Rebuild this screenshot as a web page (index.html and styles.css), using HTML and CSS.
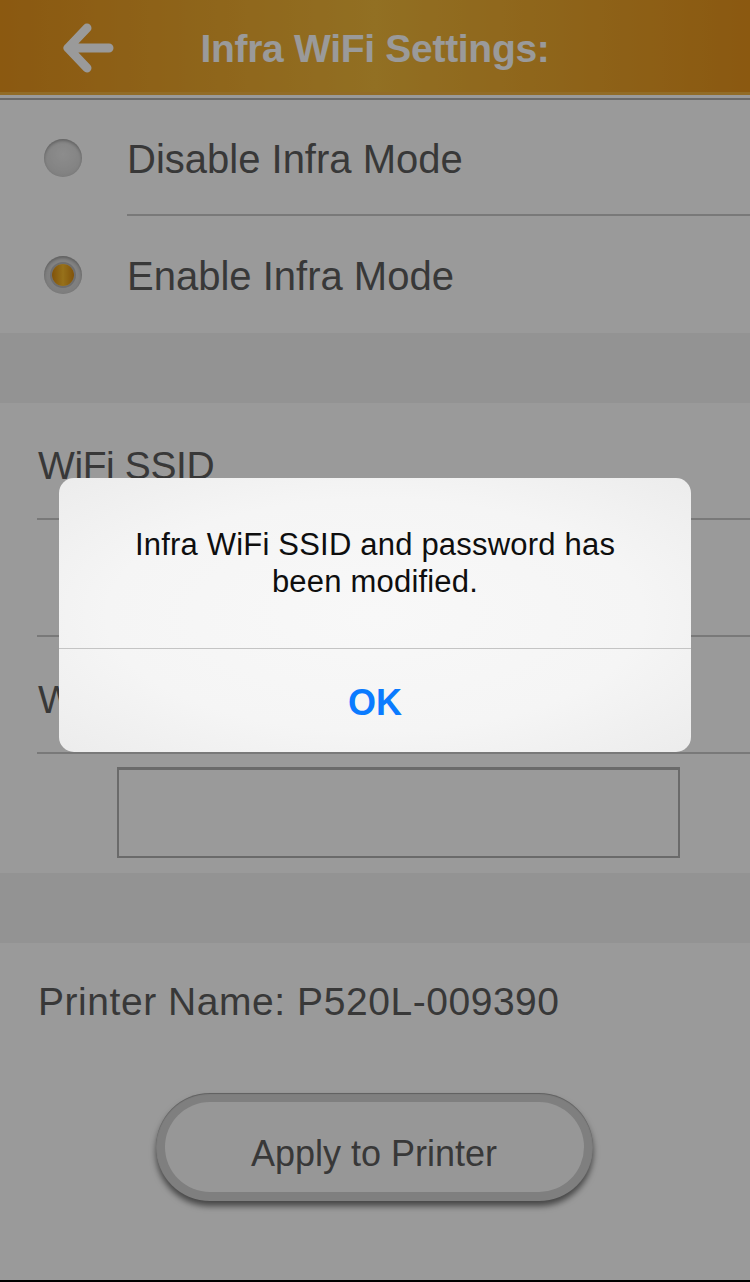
FILE: index.html
```html
<!DOCTYPE html>
<html lang="en">
<head>
<meta charset="utf-8">
<title>Infra WiFi Settings</title>
<link rel="stylesheet" href="styles.css">
</head>
<body>
<div class="screen">
  <header class="topbar">
    <div class="back" aria-label="Back">
      <svg width="52" height="52" viewBox="0 0 52 52">
        <path d="M25 6 L6 26 L25 46 M6 26 L47 26" fill="none" stroke="#ffffff" stroke-width="9" stroke-linecap="round" stroke-linejoin="round"/>
      </svg>
    </div>
    <h1 class="title">Infra WiFi Settings:</h1>
  </header>
  <div class="shade-line"></div>

  <section class="group radios">
    <div class="radio-row">
      <span class="radio"></span>
      <span class="radio-label">Disable Infra Mode</span>
    </div>
    <div class="radio-row">
      <span class="radio on"><span class="dot"></span></span>
      <span class="radio-label">Enable Infra Mode</span>
    </div>
  </section>

  <div class="band"></div>

  <section class="group form">
    <div class="field-label">WiFi SSID</div>
    <div class="field-input"></div>
    <div class="field-label">WiFi Password</div>
    <div class="box-row"><div class="textbox"></div></div>
  </section>

  <div class="band"></div>

  <section class="group bottom">
    <div class="printer-name">Printer Name: P520L-009390</div>
    <div class="btn-row">
      <div class="apply-btn"><span>Apply to Printer</span></div>
    </div>
  </section>
  <div class="bottom-edge"></div>

  <div class="overlay"></div>
  <div class="alert">
    <div class="alert-msg">Infra WiFi SSID and password has been modified.</div>
    <div class="alert-btn">OK</div>
  </div>
</div>
</body>
</html>
```

FILE: styles.css
```css
* { box-sizing: border-box; }
html, body { margin: 0; padding: 0; }
body {
  width: 750px;
  height: 1282px;
  overflow: hidden;
  font-family: "Liberation Sans", Arial, sans-serif;
  background: #ffffff;
}
.screen {
  position: relative;
  width: 750px;
  height: 1282px;
  display: flex;
  flex-direction: column;
  background: #ffffff;
}
.topbar {
  height: 95px;
  flex: none;
  display: flex;
  align-items: center;
  position: relative;
  background: linear-gradient(90deg, #e6931c 0%, #f2b93a 50%, #e6931c 100%);
  border-bottom: 3px solid #f2b441;
}
.back {
  width: 52px;
  height: 52px;
  margin-left: 62px;
  margin-top: 4px;
  display: flex;
}
.title {
  position: absolute;
  left: 0;
  right: 0;
  top: 25px;
  margin: 0;
  text-align: center;
  font-size: 39px;
  font-weight: bold;
  color: #ffffff;
  line-height: 48px;
  letter-spacing: -0.3px;
}
.shade-line {
  height: 5px;
  flex: none;
  background: #ffffff;
  border-bottom: 2px solid #b0b0b0;
}
.group { background: #ffffff; flex: none; }
.radios { height: 233px; display: flex; flex-direction: column; }
.radio-row {
  height: 116px;
  display: flex;
  align-items: center;
  padding-left: 44px;
  position: relative;
}
.radio-row + .radio-row { height: 117px; }
.radio-row:first-child::after {
  content: "";
  position: absolute;
  left: 127px;
  right: 0;
  bottom: 0;
  height: 2px;
  background: #c9c9c9;
}
.radio {
  width: 38px;
  height: 38px;
  border-radius: 50%;
  background: radial-gradient(circle at 50% 40%, #e9e9e9 0%, #dadada 60%, #c4c4c4 100%);
  box-shadow: inset 0 2px 3px rgba(0,0,0,0.25), 0 1px 0 rgba(255,255,255,0.6);
  display: flex;
  align-items: center;
  justify-content: center;
  flex: none;
}
.radio.on {
  background: radial-gradient(circle at 50% 45%, #e4e4e4 0%, #d0d0d0 70%, #bdbdbd 100%);
}
.dot {
  width: 22px;
  height: 22px;
  border-radius: 50%;
  background: linear-gradient(90deg, #d68a12 0%, #f9bb2c 50%, #d68a12 100%);
  box-shadow: 0 0 0 2px rgba(120,120,120,0.35);
}
.radio-label {
  margin-left: 45px;
  font-size: 40px;
  color: #5e5e5e;
  line-height: 1;
  margin-top: 2px;
}
.band { height: 70px; flex: none; background: #f4f4f4; }
.form { height: 470px; display: flex; flex-direction: column; padding-left: 37px; }
.field-label {
  height: 117px;
  flex: none;
  border-bottom: 2px solid #c9c9c9;
  font-size: 39px;
  color: #5e5e5e;
  padding-top: 41px;
  padding-left: 1px;
  letter-spacing: -0.4px;
}
.field-input {
  height: 117px;
  flex: none;
  border-bottom: 2px solid #c9c9c9;
}
.box-row {
  padding: 13px 0 0 80px;
}
.textbox {
  width: 563px;
  height: 91px;
  border: 2px solid #b0b0b0;
  border-top-width: 3px;
}
.bottom { flex: 1; display: flex; flex-direction: column; }
.printer-name {
  margin-top: 37px;
  padding-left: 38px;
  font-size: 39px;
  color: #5e5e5e;
  letter-spacing: 0.55px;
}
.btn-row {
  margin-top: 69px;
  display: flex;
  justify-content: center;
  padding-right: 2px;
}
.apply-btn {
  width: 437px;
  height: 108px;
  border-radius: 54px;
  background: #d2d2d2;
  padding: 9px;
  box-shadow: 0 5px 6px rgba(0,0,0,0.55), inset 0 1px 1px rgba(0,0,0,0.25);
  display: flex;
}
.apply-btn span {
  flex: 1;
  border-radius: 45px;
  background: #fafafa;
  display: flex;
  align-items: center;
  justify-content: center;
  font-size: 36px;
  color: #5e5e5e;
  padding-top: 13px;
}
.bottom-edge { height: 2px; flex: none; background: #000000; }
.overlay {
  position: absolute;
  inset: 0;
  background: rgba(0,0,0,0.395);
}
.alert {
  position: absolute;
  left: 59px;
  top: 478px;
  width: 632px;
  height: 274px;
  border-radius: 15px;
  background: radial-gradient(ellipse at 50% 50%, #f8f8f8 0%, #f5f5f5 60%, #ececec 100%);
  display: flex;
  flex-direction: column;
  overflow: hidden;
}
.alert-msg {
  height: 171px;
  flex: none;
  border-bottom: 1px solid #c4c4c4;
  padding: 48px 40px 0;
  text-align: center;
  font-size: 31px;
  line-height: 37px;
  letter-spacing: 0.2px;
  color: #0e0e0e;
}
.alert-btn {
  flex: 1;
  display: flex;
  align-items: center;
  justify-content: center;
  font-size: 36px;
  font-weight: bold;
  color: #0a7bff;
  padding-top: 4px;
}
```
